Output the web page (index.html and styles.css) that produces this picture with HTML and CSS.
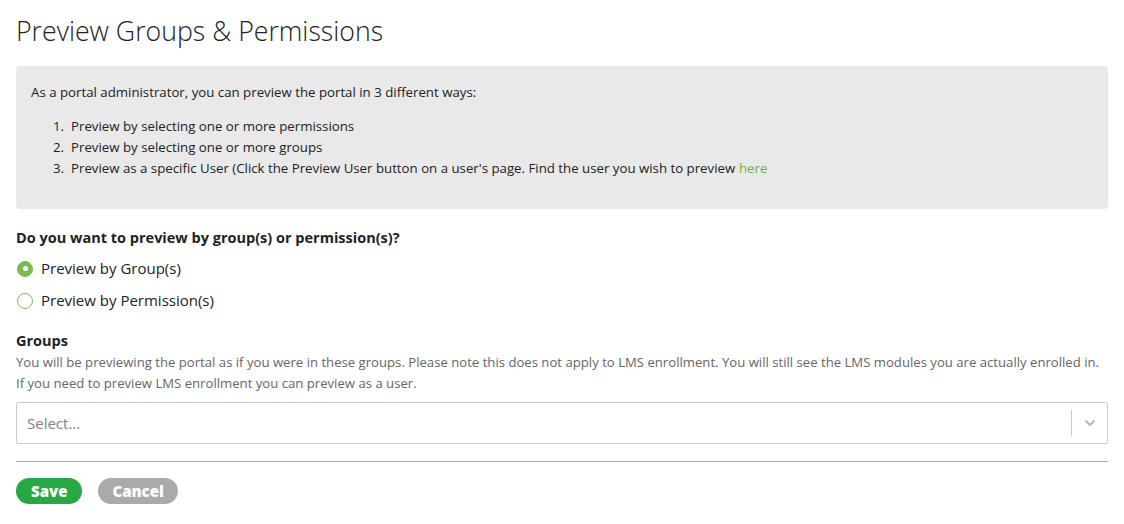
FILE: index.html
```html
<!DOCTYPE html>
<html>
<head>
<meta charset="utf-8">
<link rel="stylesheet" href="styles.css">
</head>
<body>
<div class="page">
  <h1 class="title">Preview Groups &amp; Permissions</h1>
  <div class="info">
    <p>As a portal administrator, you can preview the portal in 3 different ways:</p>
    <ol>
      <li>Preview by selecting one or more permissions</li>
      <li>Preview by selecting one or more groups</li>
      <li>Preview as a specific User (Click the Preview User button on a user's page. Find the user you wish to preview <a href="#">here</a></li>
    </ol>
  </div>
  <div class="question">Do you want to preview by group(s) or permission(s)?</div>
  <label class="radio"><span class="dot checked"></span>Preview by Group(s)</label>
  <label class="radio"><span class="dot"></span>Preview by Permission(s)</label>
  <div class="groups-label">Groups</div>
  <div class="help">You will be previewing the portal as if you were in these groups. Please note this does not apply to LMS enrollment. You will still see the LMS modules you are actually enrolled in.<br>If you need to preview LMS enrollment you can preview as a user.</div>
  <div class="select">
    <span class="placeholder">Select...</span>
    <span class="sep"></span>
    <span class="chev"><svg width="12" height="8" viewBox="0 0 12 8"><path d="M1.5 1.5 L6 6 L10.5 1.5" fill="none" stroke="#bbb" stroke-width="2"/></svg></span>
  </div>
  <hr class="rule">
  <div class="actions">
    <button class="btn save">Save</button>
    <button class="btn cancel">Cancel</button>
  </div>
</div>
</body>
</html>
```
FILE: styles.css
```css
html, body { margin: 0; padding: 0; background: #fff; }
body { font-family: "Open Sans", Lato, sans-serif; color: #222; }
.page { padding: 0 16px; }
.title { font-weight: 300; font-size: 26.7px; margin: 0; padding-top: 15px; line-height: 32px; color: #222; }
.info { margin-top: 19px; background: #e9e9e9; border-radius: 4px; padding: 16px 15px 26px; font-size: 13.25px; height: 101px; }
.info p { margin: 0; line-height: 21px; }
.info ol { margin: 13px 0 0; padding-left: 22px; line-height: 21px; list-style: none; counter-reset: step; }
.info li { display: flex; counter-increment: step; }
.info li::before { content: counter(step) "."; flex: 0 0 18px; }
.info a { color: #6cb33f; text-decoration: none; margin-left: 0.28em; }
.question { font-weight: 700; font-size: 14.5px; margin-top: 18px; line-height: 22px; }
.radio { display: flex; align-items: center; font-size: 15px; line-height: 31px; gap: 8px; }
.radio:first-of-type { margin-top: 4px; }
.radio + .radio { margin-top: 1px; }
.dot { width: 14px; height: 14px; border: 1.5px solid #7dbb52; border-radius: 50%; box-sizing: content-box; display: inline-block; margin-left: 1px; }
.dot.checked { background: #7dbb52; position: relative; }
.dot.checked::after { content: ""; position: absolute; left: 4.5px; top: 4.5px; width: 5px; height: 5px; border-radius: 50%; background: #fff; }
.groups-label { font-weight: 700; font-size: 14.5px; margin-top: 14px; line-height: 22px; }
.help { font-size: 13.15px; color: #666; line-height: 21px; }
.select { margin-top: 8px; height: 40px; border: 1px solid #ccc; border-radius: 2px; display: flex; align-items: center; padding-left: 10px; }
.placeholder { flex: 1; font-size: 15px; color: #808080; }
.sep { width: 1px; height: 26px; background: #ccc; }
.chev { width: 35px; display: flex; justify-content: center; align-items: center; }
.rule { border: 0; border-top: 1px solid #aaa; margin: 17px 0 0; }
.actions { display: flex; gap: 16px; margin-top: 16px; }
.btn { border: 0; border-radius: 14px; height: 26px; font-family: inherit; font-weight: 800; font-size: 15px; color: #fff; padding: 0 15px; }
.save { background: #28a745; }
.cancel { background: #aaa; padding: 0 14px; }
```
